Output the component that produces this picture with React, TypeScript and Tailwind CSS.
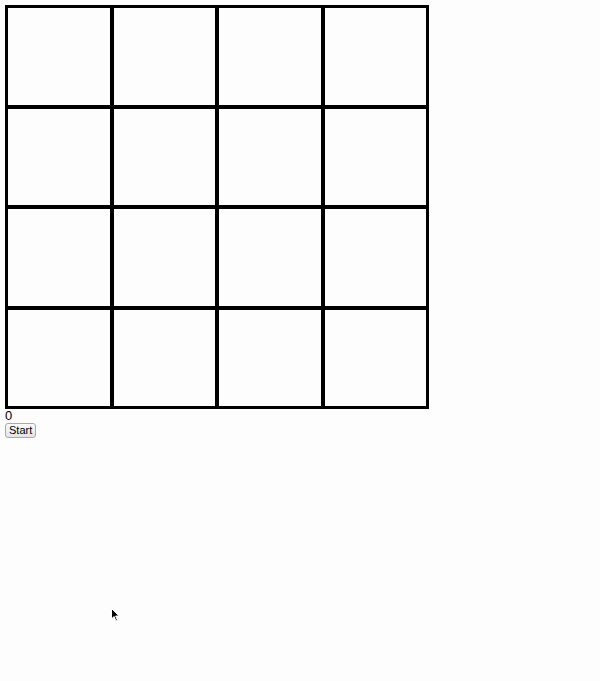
import React from 'react';

const cells = Array.from({ length: 16 }, (_, i) => i);

export default function App() {
  return (
    <div className="relative min-h-[681px] bg-[#fefdfe] font-['Liberation_Sans',Arial,sans-serif] text-black">
      <div className="pl-[5px] pt-[5px]">
        <div className="grid h-[404px] w-[424px] grid-cols-4 grid-rows-4 gap-[4px] border-[3px] border-black bg-black">
          {cells.map((i) => (
            <div key={i} className="bg-[#fefdfe]" />
          ))}
        </div>
        <div className="text-[13px] leading-[14px]">0</div>
        <button className="block rounded-[3px] border border-[#a9a9a9] bg-gradient-to-b from-[#fbfbfb] to-[#e4e4e4] px-[3px] py-0 text-[11px] leading-[13px]">
          Start
        </button>
      </div>

      {/* mouse pointer left in the screenshot */}
      <svg className="absolute left-[111px] top-[608px]" width="9" height="14" viewBox="0 0 9 14">
        <path d="M0.5 0.5 L0.5 11 L3 8.5 L5 13 L6.5 12.3 L4.6 8 L8 8 Z" fill="#000" stroke="#fff" strokeWidth="1" />
      </svg>
    </div>
  );
}
